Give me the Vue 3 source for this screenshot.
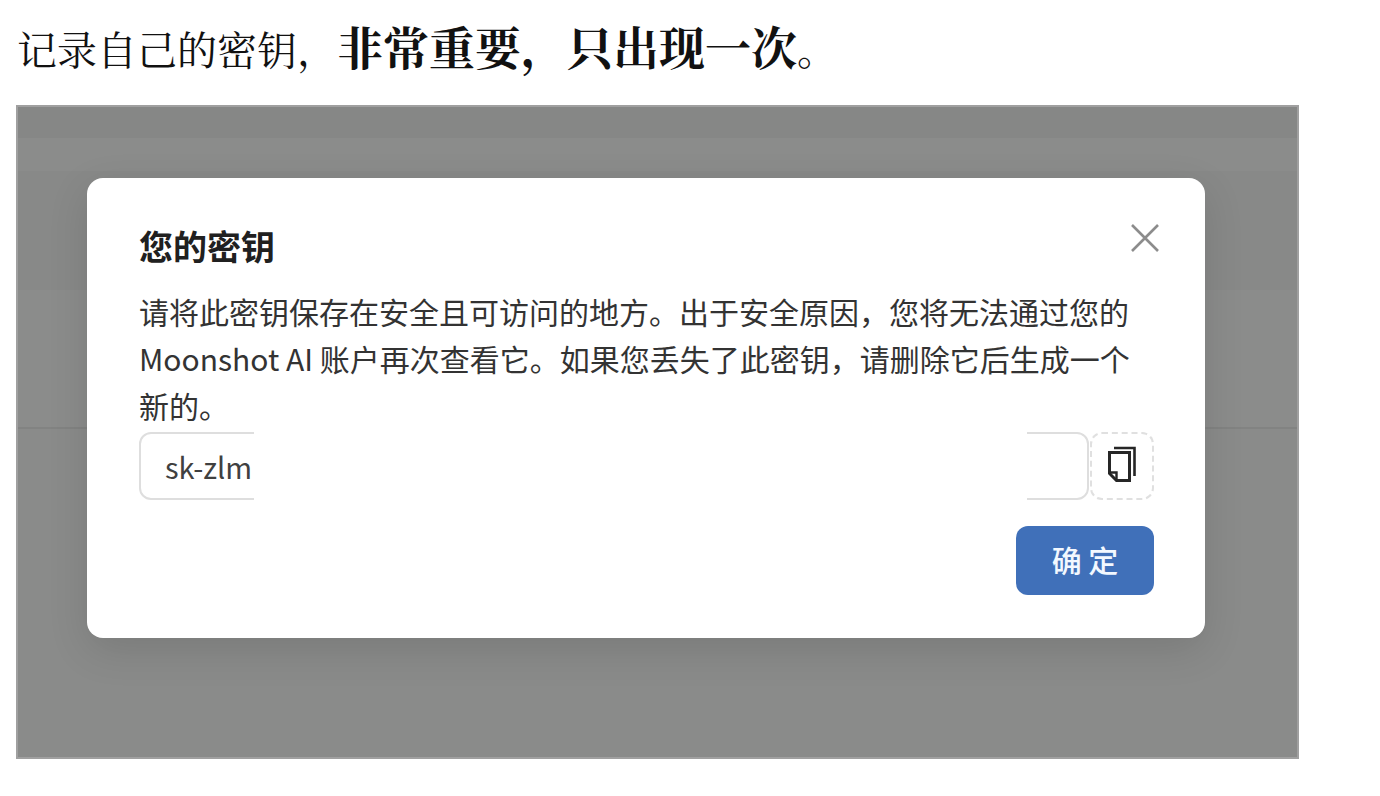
<script setup>
import { ref } from 'vue'

const secret = ref('sk-zlm')
</script>

<template>
  <main class="page">
    <p class="note">记录自己的密钥，<strong>非常重要，只出现一次</strong>。</p>

    <div class="backdrop">
      <section class="dialog" role="dialog" aria-labelledby="dialog-title">
        <header class="head">
          <h1 id="dialog-title">您的密钥</h1>
          <button class="close" type="button" aria-label="关闭">
            <svg viewBox="0 0 28 28" width="28" height="28" fill="none" stroke="#8c8c8c" stroke-width="2.6">
              <path d="M1 1 L27 27 M27 1 L1 27" />
            </svg>
          </button>
        </header>

        <p class="message">请将此密钥保存在安全且可访问的地方。出于安全原因，您将无法通过您的 Moonshot AI 账户再次查看它。如果您丢失了此密钥，请删除它后生成一个新的。</p>

        <div class="key-row">
          <div class="field">
            <input v-model="secret" type="text" readonly aria-labelledby="dialog-title" />
            <span class="mask"></span>
          </div>
          <button class="copy" type="button" aria-label="复制">
            <svg viewBox="0 0 30 36" width="30" height="36" fill="none" stroke="#262626">
              <path d="M7 2 H27.5 V30" stroke-width="2.6" />
              <path d="M2.5 6.5 H22.5 V34.5 H9.5 L2.5 27.5 Z" stroke-width="3" />
              <path d="M2.5 26.5 H9.5 V34.5" stroke-width="2.4" />
            </svg>
          </button>
        </div>

        <footer class="actions">
          <button class="confirm" type="button">确 定</button>
        </footer>
      </section>
    </div>
  </main>
</template>

<style>
body {
  margin: 0;
  background: #fff;
}
</style>

<style scoped>
.page {
  padding: 13px 81px 37px 16px;
  font-family: "Noto Sans CJK SC", sans-serif;
}

.note {
  margin: 0 0 25px;
  padding-left: 1px;
  font-family: "Noto Serif CJK SC", "Noto Sans CJK SC", serif;
  font-size: 40px;
  font-weight: 400;
  line-height: 64px;
  color: #111;
}

.note strong {
  font-size: 46px;
  font-weight: 700;
  line-height: 64px;
}

.backdrop {
  padding: 71px 92px 119px 69px;
  border: 2px solid #a0a0a0;
  background: linear-gradient(
    #868786 0 31px,
    #8b8c8b 31px 64px,
    #888988 64px 183px,
    #8b8c8b 183px 320px,
    #828382 320px 322px,
    #8a8b8a 322px
  );
}

.dialog {
  padding: 42px 51px 43px 52px;
  border-radius: 16px;
  background: #fff;
  box-shadow: 0 12px 40px rgba(0, 0, 0, 0.12);
}

.head {
  display: flex;
  align-items: flex-start;
  justify-content: space-between;
  margin-bottom: 16px;
}

h1 {
  margin: 0;
  font-size: 34px;
  font-weight: 700;
  line-height: 52px;
  color: #202020;
}

button {
  display: flex;
  align-items: center;
  justify-content: center;
  padding: 0;
  font-family: inherit;
  cursor: pointer;
}

.close {
  width: 36px;
  height: 36px;
  margin-right: -9px;
  border: 0;
  background: transparent;
}

.message {
  margin: 0 0 3px;
  padding-right: 18px;
  font-size: 30px;
  line-height: 47px;
  color: #333;
}

.key-row {
  display: flex;
  gap: 1px;
}

.field {
  position: relative;
  flex: 1;
}

input {
  box-sizing: border-box;
  width: 100%;
  height: 68px;
  padding: 0 24px;
  border: 2px solid #dedede;
  border-radius: 12px;
  background: #fff;
  font-family: inherit;
  font-size: 29px;
  color: #404040;
  outline: 0;
}

.mask {
  position: absolute;
  inset: 0 62px 0 115px;
  background: #fff;
}

.copy {
  width: 64px;
  height: 68px;
  padding-bottom: 4px;
  border: 2px dashed #e0e0e0;
  border-radius: 12px;
  background: #fff;
}

.actions {
  display: flex;
  justify-content: flex-end;
  margin-top: 26px;
}

.confirm {
  width: 138px;
  height: 69px;
  padding-bottom: 4px;
  border: 0;
  border-radius: 12px;
  background: #4070b9;
  font-size: 30px;
  font-weight: 500;
  color: #f2f8ff;
}
</style>
